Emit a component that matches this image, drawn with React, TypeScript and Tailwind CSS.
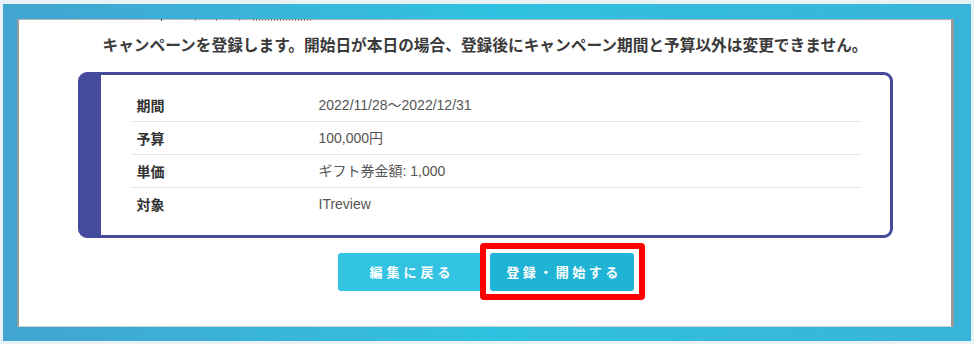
import React from "react";

const rows: { label: string; value: string }[] = [
  { label: "期間", value: "2022/11/28～2022/12/31" },
  { label: "予算", value: "100,000円" },
  { label: "単価", value: "ギフト券金額: 1,000" },
  { label: "対象", value: "ITreview" },
];

export default function App() {
  return (
    <div
      className="w-[974px] h-[344px] bg-[#e9f3f7] pt-[4px] pl-[3px] pr-[3px] pb-[3px] overflow-hidden"
      style={{ fontFamily: '"Liberation Sans", "Noto Sans CJK JP", sans-serif' }}
    >
      <div className="h-full w-full bg-gradient-to-r from-[#41a5d0] via-[#2fc1e1] to-[#39b3d9] pl-[14px] pt-[15px] pr-[17px] pb-[14px]">
        <div className="relative h-full w-full bg-white border-l-2 border-t border-r-[3px] border-b border-l-[#9a9a9a] border-t-[#b5b5b5] border-r-[#999999] border-b-[#d0d0d0]">
          <div className="absolute left-[142px] top-[-1px] flex h-[2px]">
            <span className="block w-[1px] h-[2px] bg-[#444]" />
            <span className="block ml-[33px] w-[1px] h-[2px] bg-[#999]" />
            <span className="block ml-[20px] w-[1px] h-[2px] bg-[#888]" />
            <span className="block ml-[22px] w-[1px] h-[2px] bg-[#999]" />
            <span className="block ml-[13px] w-[58px] h-[2px] bg-[repeating-linear-gradient(90deg,#8a7f70_0px,#8a7f70_1px,transparent_1px,transparent_3px)]" />
          </div>
          <div
            className="pt-[13px] text-center text-[15.7px] leading-[24px] font-bold text-[#3a3a3a]"
            style={{ fontFamily: '"Noto Sans CJK JP", sans-serif' }}
          >
            キャンペーンを登録します。開始日が本日の場合、登録後にキャンペーン期間と予算以外は変更できません。
          </div>
          <div className="mx-auto mt-[15px] w-[815px] h-[166px] rounded-[9px] border-[3px] border-l-[23px] border-[#444b9c] pl-[30px] pr-[28px] pt-[14px]">
            {rows.map((r, i) => (
              <div
                key={r.label}
                className={
                  "flex items-center h-[33px] " +
                  (i < rows.length - 1 ? "border-b border-[#e6e6e6]" : "")
                }
              >
                <div
                  className="w-[188px] pl-[6px] text-[14px] font-bold text-[#333]"
                  style={{ fontFamily: '"Noto Sans CJK JP", sans-serif' }}
                >
                  {r.label}
                </div>
                <div className="text-[14px] text-[#555]">{r.value}</div>
              </div>
            ))}
          </div>
          <div
            className="mt-[15px] flex justify-center gap-[8px] pl-[2px]"
            style={{ fontFamily: '"Noto Sans CJK JP", sans-serif' }}
          >
            <button className="w-[144px] h-[38px] rounded-[3px] bg-[#32c2e2] text-white text-[13px] font-bold tracking-[4px] pl-[4px]">
              編集に戻る
            </button>
            <div className="relative">
              <div className="absolute left-[-10px] top-[-10px] w-[165px] h-[57px] rounded-[4px] border-[6px] border-[#ff0000]" />
              <button className="relative w-[144px] h-[38px] rounded-[3px] bg-[#1fb4d5] text-white text-[13px] font-bold tracking-[3.5px] pl-[4px]">
                登録・開始する
              </button>
            </div>
          </div>
        </div>
      </div>
    </div>
  );
}
